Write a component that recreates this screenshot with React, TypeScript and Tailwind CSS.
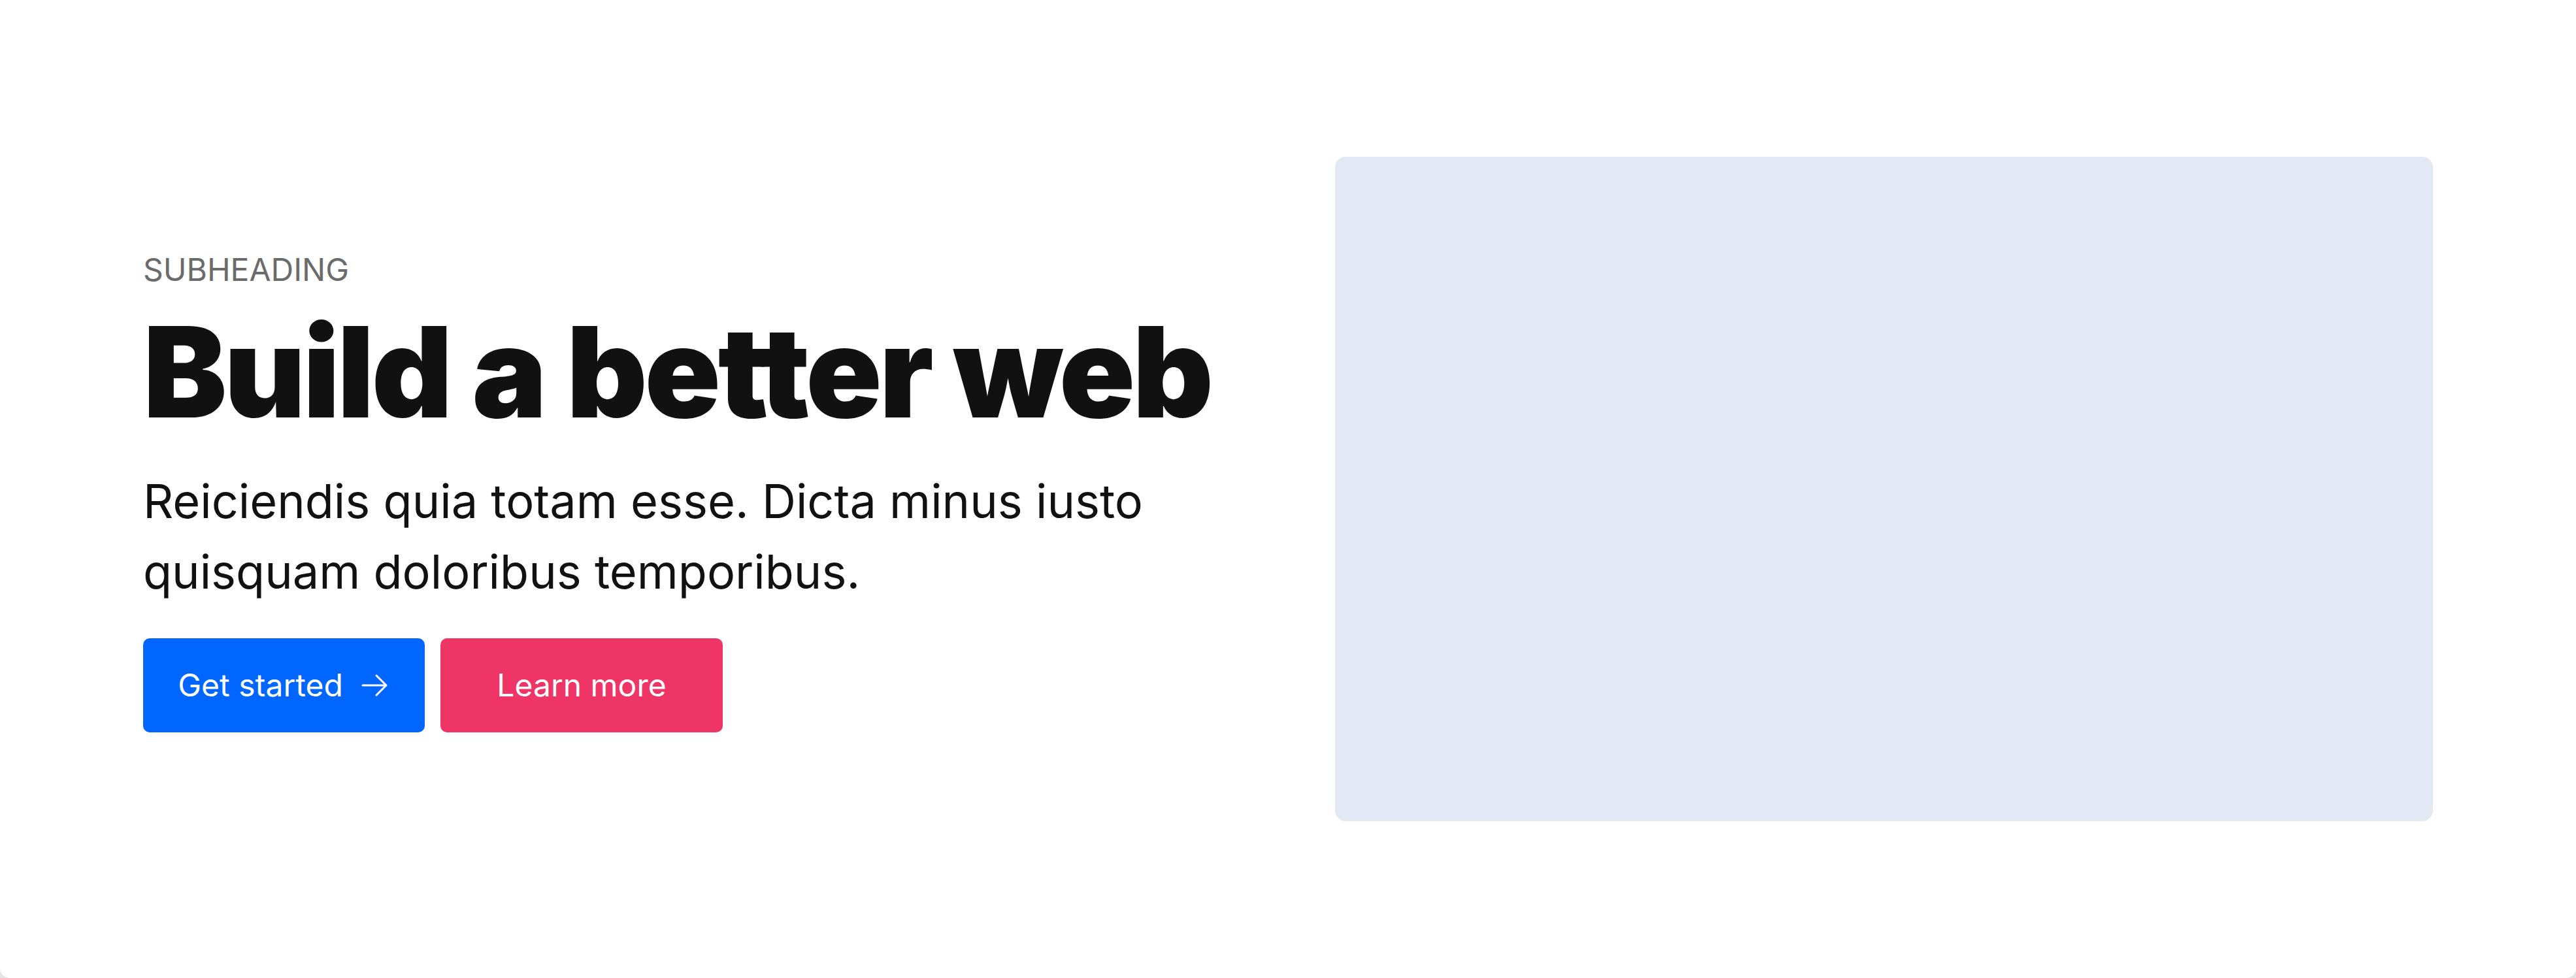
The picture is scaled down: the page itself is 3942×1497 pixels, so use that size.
import React from 'react';

function ArrowRight() {
    return (
        <svg
            xmlns="http://www.w3.org/2000/svg"
            viewBox="0 0 24 24"
            fill="none"
            stroke="currentColor"
            strokeWidth={1.5}
            className="w-12 h-12"
        >
            <path strokeLinecap="round" strokeLinejoin="round" d="M13.5 4.5 21 12m0 0-7.5 7.5M21 12H3" />
        </svg>
    );
}

function Hero() {
    return (
        <section className="grid grid-cols-2 gap-[144px] items-center px-[219px] py-[240px]">
            <div className="flex flex-col">
                <p className="text-[48px] leading-[1.5] text-[#6b6b6b] uppercase">Subheading</p>
                <h1 className="mt-6 text-[192px] leading-none font-black tracking-[-0.022em] text-[#111111] whitespace-nowrap">
                    Build a better web
                </h1>
                <p className="mt-12 text-[72px] leading-[1.5] text-[#111111]">
                    Reiciendis quia totam esse. Dicta minus iusto quisquam doloribus temporibus.
                </p>
                <div className="mt-12 flex gap-6">
                    <a
                        href="#start"
                        className="inline-flex items-center justify-center gap-6 h-[144px] w-[431px] rounded-[10px] bg-[#0066ff] text-white text-[48px]"
                    >
                        Get started
                        <ArrowRight />
                    </a>
                    <a
                        href="#learn"
                        className="inline-flex items-center justify-center h-[144px] w-[432px] rounded-[10px] bg-[#ee3566] text-white text-[48px]"
                    >
                        Learn more
                    </a>
                </div>
            </div>
            <div className="h-[1017px] rounded-[16px] bg-[#e2e8f4]" />
        </section>
    );
}

export default function App() {
    return (
        <div className="bg-[#e4e4e4] font-['Inter',sans-serif]">
            <div className="bg-white rounded-b-[15px]">
                <Hero />
            </div>
        </div>
    );
}
